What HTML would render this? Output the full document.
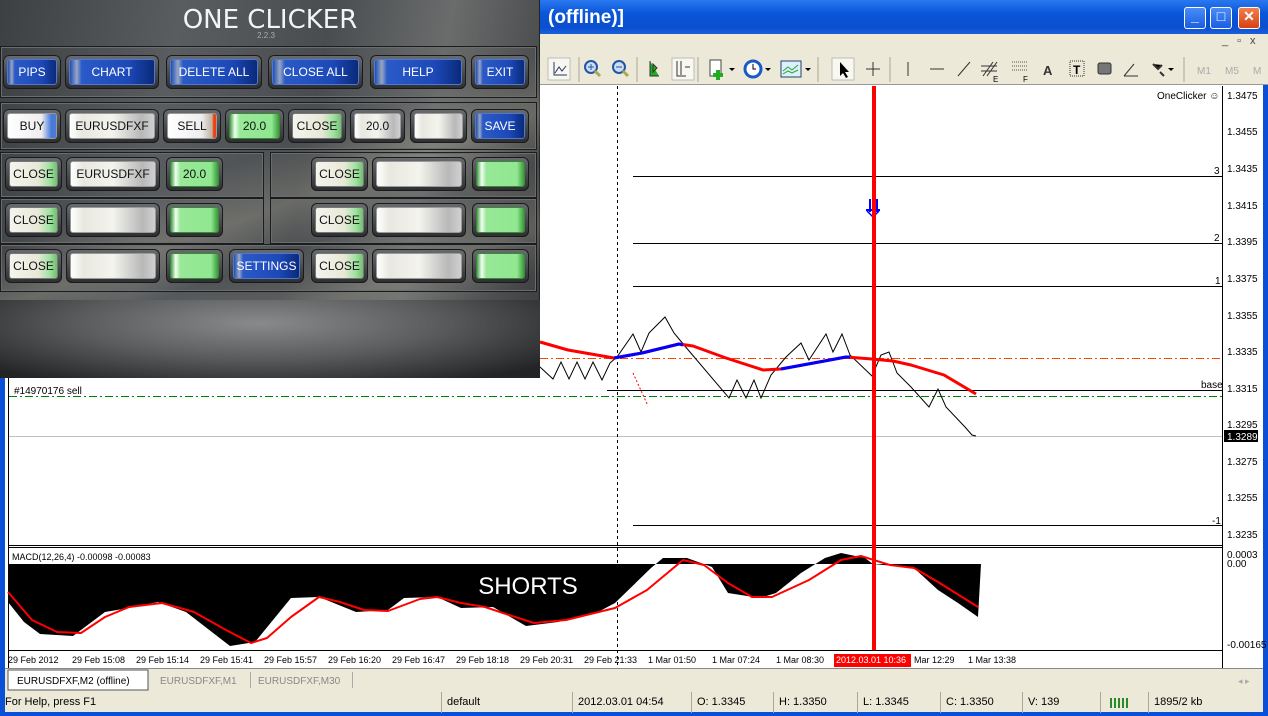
<!DOCTYPE html>
<html><head><meta charset="utf-8"><style>
*{margin:0;padding:0;box-sizing:border-box}
body{width:1268px;height:716px;overflow:hidden;position:relative;background:#fff;font-family:"Liberation Sans",sans-serif}
.a{position:absolute}
.tb{left:0;top:0;width:1268px;height:34px;background:linear-gradient(#2a78f0,#0a55d8 40%,#0a4fd0 80%,#1c5fd8)}
.menu{left:0;top:34px;width:1268px;height:20px;background:#ece9d8}
.tool{left:0;top:54px;width:1268px;height:31px;background:#ece9d8;border-bottom:1px solid #999}
.wb{width:22px;height:22px;border:1px solid #fff;border-radius:3px;background:linear-gradient(#4a8cf8,#1a5ee0);top:7px;color:#fff;font:bold 14px "Liberation Sans";text-align:center}
.panel{left:0;top:0;width:540px;height:378px;background:linear-gradient(100deg,#3d4043 0%,#5a5d60 30%,#4a4d50 55%,#6a6c6c 75%,#3a3c3e 100%);border-right:1px solid #222;border-bottom:1px solid #222}
.sec{position:absolute;border:1px solid #1c1c1c;box-shadow:inset 0 0 0 1px #6a6d70}
.f{position:absolute;border-radius:6px;background:linear-gradient(#6a6d70,#2c2e30);box-shadow:inset 0 0 0 1px #1a1a1a}
.b{position:absolute;left:4px;right:4px;top:4px;bottom:4px;border-radius:3px;font:12px "Liberation Sans";text-align:center;display:flex;align-items:center;justify-content:center}
.bl{background:linear-gradient(90deg,#1e4fb8 0%,#9aa6c0 8%,#2a5ac8 14%,#1c48b8 70%,#0a2a7a 100%);color:#fff;border:1px solid #5078d0}
.wh{background:linear-gradient(90deg,#fff 0%,#e8e8e0 15%,#f4f4ee 50%,#b8b8b8 85%,#d0d0d0 100%);color:#111;border:1px solid #9a9a9a}
.cl{background:linear-gradient(90deg,#f4f4ee 0%,#e8e8d8 60%,#a0e0a0 85%,#70c070 100%);color:#111;border:1px solid #777}
.gr{background:linear-gradient(90deg,#4a9a4a 0%,#f0fff0 10%,#98e898 20%,#90e890 85%,#3a9a3a 100%);color:#111;border:1px solid #3a8a3a}
.st{top:692px;height:21px;font:11px "Liberation Sans";color:#000;line-height:21px;border-left:1px solid #aca899;padding-left:5px}
</style></head><body>
<svg class="a" style="left:0;top:0" width="1268" height="716" font-family="Liberation Sans" font-size="10">
<rect x="0" y="85" width="1268" height="631" fill="#fff"/>
<rect x="0" y="85" width="5" height="631" fill="#0a4fd8"/>
<rect x="1263" y="0" width="5" height="716" fill="#0a4fd8"/>
<rect x="0" y="712" width="1268" height="4" fill="#0a4fd8"/>
<line x1="8.5" y1="86" x2="8.5" y2="668" stroke="#000"/>
<line x1="1222.5" y1="86" x2="1222.5" y2="668" stroke="#000"/>
<line x1="8" y1="545.5" x2="1222" y2="545.5" stroke="#000"/>
<line x1="8" y1="547.5" x2="1222" y2="547.5" stroke="#000"/>
<line x1="8" y1="650.5" x2="1222" y2="650.5" stroke="#000"/>
<g fill="#000">
<text x="1227" y="99">1.3475</text><text x="1227" y="135">1.3455</text><text x="1227" y="172">1.3435</text><text x="1227" y="209">1.3415</text><text x="1227" y="245">1.3395</text><text x="1227" y="282">1.3375</text><text x="1227" y="319">1.3355</text><text x="1227" y="355">1.3335</text><text x="1227" y="392">1.3315</text><text x="1227" y="428">1.3295</text><text x="1227" y="465">1.3275</text><text x="1227" y="501">1.3255</text><text x="1227" y="538">1.3235</text>
<text x="1227" y="558">0.0003</text><text x="1227" y="567">0.00</text><text x="1227" y="648">-0.00165</text>
<text x="1157" y="99">OneClicker ☺</text>
<text x="1214" y="174">3</text><text x="1214" y="241">2</text><text x="1215" y="284">1</text><text x="1201" y="388">base</text><text x="1212" y="524">-1</text>
<text x="14" y="394">#14970176 sell</text>
<text x="12" y="560" font-size="9">MACD(12,26,4) -0.00098 -0.00083</text>
</g>
<line x1="633" y1="176.5" x2="1222" y2="176.5" stroke="#000"/>
<line x1="633" y1="243.5" x2="1222" y2="243.5" stroke="#000"/>
<line x1="633" y1="286.5" x2="1222" y2="286.5" stroke="#000"/>
<line x1="607" y1="390.5" x2="1222" y2="390.5" stroke="#000"/>
<line x1="633" y1="525.5" x2="1222" y2="525.5" stroke="#000"/>
<line x1="540" y1="358.5" x2="1222" y2="358.5" stroke="#ff4500" stroke-dasharray="8,3,2,3"/>
<line x1="9" y1="396.5" x2="1222" y2="396.5" stroke="#008000" stroke-dasharray="8,3,2,3"/>
<line x1="9" y1="436.5" x2="1222" y2="436.5" stroke="#c0c0c0"/>
<rect x="1224" y="430" width="34" height="12" fill="#000"/><text x="1227" y="440" fill="#fff">1.3289</text>
<line x1="617.5" y1="86" x2="617.5" y2="668" stroke="#000" stroke-dasharray="3,3"/>
<line x1="633" y1="373" x2="648" y2="406" stroke="#f00" stroke-dasharray="2,2"/>
<polyline fill="none" stroke="#000" stroke-width="1" points="540,367 553,379 561,362 569,379 577,362 585,379 593,362 602,380 610,363 617,357 633,334 641,352 649,333 665,317 674,333 684,345 729,398 737,380 746,398 754,380 761,398 771,375 786,357 801,343 809,360 826,334 833,352 842,334 850,355 872,376 881,355 889,352 897,373 911,387 929,407 938,389 946,407 965,427 972,435 976,436"/>
<polyline fill="none" stroke="#f00" stroke-width="3" stroke-linejoin="round" points="540,342 568,350 614,358 642,353 679,344 693,346 726,358 763,370 781,369 819,362 846,357 872,359 893,361 911,365 944,375 976,394"/>
<polyline fill="none" stroke="#00f" stroke-width="3" stroke-linejoin="round" points="614,358 642,353 679,344 683,345"/>
<polyline fill="none" stroke="#00f" stroke-width="3" stroke-linejoin="round" points="781,369 819,362 846,357 850,357"/>
<path d="M870 199v13M877 199v13M866 210h14" stroke="#00f" stroke-width="2" fill="none"/><path d="M867 211l6 6 6-6" stroke="#00f" stroke-width="1.5" fill="none"/>
<polygon fill="#000" points="8,564 981,564 978,617 958,603 938,590 914,568 873,564 865,558 841,553 825,558 801,573 776,593 760,598 728,593 712,567 687,558 663,558 651,568 615,603 598,612 558,622 526,626 493,607 461,608 437,597 404,598 388,610 356,612 319,597 291,598 255,642 230,646 186,612 158,602 129,608 105,612 73,636 40,634 24,622 8,602"/>
<polyline fill="none" stroke="#f00" stroke-width="2" stroke-linejoin="round" points="8,592 32,620 57,632 81,633 105,617 129,607 162,603 194,612 226,630 251,643 267,638 291,617 319,597 340,602 364,610 388,611 420,599 437,597 461,603 485,607 509,615 534,623 566,620 615,608 647,590 683,560 704,565 728,583 752,597 772,597 809,580 841,560 861,556 890,565 914,568 938,582 978,607"/>
<text x="528" y="594" fill="#fff" font-size="24" text-anchor="middle">SHORTS</text>
<rect x="872" y="86" width="4" height="564" fill="#f00"/>
<g font-size="9" fill="#000">
<text x="8" y="663">29 Feb 2012</text><text x="72" y="663">29 Feb 15:08</text><text x="136" y="663">29 Feb 15:14</text><text x="200" y="663">29 Feb 15:41</text><text x="264" y="663">29 Feb 15:57</text><text x="328" y="663">29 Feb 16:20</text><text x="392" y="663">29 Feb 16:47</text><text x="456" y="663">29 Feb 18:18</text><text x="520" y="663">29 Feb 20:31</text><text x="584" y="663">29 Feb 21:33</text><text x="648" y="663">1 Mar 01:50</text><text x="712" y="663">1 Mar 07:24</text><text x="776" y="663">1 Mar 08:30</text><text x="914" y="663">Mar 12:29</text><text x="968" y="663">1 Mar 13:38</text>
</g>
<rect x="834" y="654" width="77" height="13" fill="#f00"/><text x="836" y="663" font-size="9" fill="#fff">2012.03.01 10:36</text>
<rect x="5" y="668" width="1258" height="24" fill="#ece9d8"/>
<line x1="5" y1="668.5" x2="1263" y2="668.5" stroke="#888"/>
<rect x="8" y="670" width="140" height="20" fill="#fff" stroke="#555"/>
<text x="17" y="684" font-size="10">EURUSDFXF,M2 (offline)</text>
<text x="160" y="684" font-size="10" fill="#888">EURUSDFXF,M1</text>
<text x="258" y="684" font-size="10" fill="#888">EURUSDFXF,M30</text>
<line x1="250.5" y1="672" x2="250.5" y2="688" stroke="#aaa"/><line x1="352.5" y1="672" x2="352.5" y2="688" stroke="#aaa"/>
<text x="1238" y="684" fill="#aaa" font-size="9">◂ ▸</text>
<rect x="5" y="692" width="1258" height="20" fill="#ece9d8"/>
<g fill="#2a8a2a"><rect x="1110" y="698" width="2" height="10"/><rect x="1114" y="698" width="2" height="10"/><rect x="1118" y="698" width="2" height="10"/><rect x="1122" y="698" width="2" height="10"/><rect x="1126" y="698" width="2" height="10"/></g>
</svg>
<div class="a st" style="left:0;border:none">For Help, press F1</div>
<div class="a st" style="left:441px">default</div>
<div class="a st" style="left:572px">2012.03.01 04:54</div>
<div class="a st" style="left:691px">O: 1.3345</div>
<div class="a st" style="left:773px">H: 1.3350</div>
<div class="a st" style="left:857px">L: 1.3345</div>
<div class="a st" style="left:940px">C: 1.3350</div>
<div class="a st" style="left:1022px">V: 139</div>
<div class="a st" style="left:1100px;width:48px"></div>
<div class="a st" style="left:1148px">1895/2 kb</div>

<div class="a tb"></div>
<div class="a" style="left:548px;top:7px;color:#fff;font:bold 19px 'Liberation Sans'">(offline)]</div>
<div class="a wb" style="left:1184px">_</div>
<div class="a wb" style="left:1210px">□</div>
<div class="a wb" style="left:1238px;background:linear-gradient(#f08050,#d84010)">✕</div>
<div class="a menu"></div>
<div class="a" style="left:1222px;top:35px;font:11px 'Liberation Sans';color:#444;letter-spacing:9px">_▫x</div>
<div class="a tool"></div>
<svg class="a" style="left:540px;top:54px" width="728" height="31" font-family="Liberation Sans">
<g stroke="#aca899"><line x1="39" y1="3" x2="39" y2="28"/><line x1="97" y1="3" x2="97" y2="28"/><line x1="158" y1="3" x2="158" y2="28"/><line x1="278" y1="3" x2="278" y2="28"/><line x1="350" y1="3" x2="350" y2="28"/><line x1="644" y1="3" x2="644" y2="28"/></g>
<rect x="8" y="4" width="22" height="22" fill="#f8f8f0" stroke="#bbb"/>
<path d="M14 8v13h13M15 19l4-6 3 4 4-5" stroke="#236" fill="none"/>
<circle cx="51" cy="13" r="6" fill="#cde" stroke="#25a" stroke-width="2"/><path d="M48 13h6M51 10v6" stroke="#25a"/><path d="M55 17l5 5" stroke="#aa5" stroke-width="3"/>
<circle cx="79" cy="13" r="6" fill="#cde" stroke="#25a" stroke-width="2"/><path d="M76 13h6" stroke="#25a"/><path d="M83 17l5 5" stroke="#aa5" stroke-width="3"/>
<path d="M110 7v15h9M113 10v8l4-4z" stroke="#333" fill="#2a2"/>
<rect x="132" y="4" width="22" height="22" fill="#f8f8f0" stroke="#bbb"/><path d="M137 7v15h9M141 7v14M145 13h5" stroke="#333" fill="none"/>
<rect x="170" y="6" width="11" height="16" fill="#fff" stroke="#444"/><path d="M178 16v10M173 21h10" stroke="#2a2" stroke-width="4"/><path d="M189 14l3 3 3-3z" fill="#000"/>
<circle cx="213" cy="15" r="8" fill="#fff" stroke="#1a5ac8" stroke-width="3"/><path d="M213 10v5h3" stroke="#000" fill="none"/><path d="M225 14l3 3 3-3z" fill="#000"/>
<rect x="241" y="7" width="20" height="16" fill="#def" stroke="#246"/><path d="M243 17l5-4 4 3 6-5M243 20l5-3 4 2 6-3" stroke="#2a2" fill="none"/><path d="M265 14l3 3 3-3z" fill="#000"/>
<rect x="292" y="4" width="22" height="22" fill="#f8f8f0" stroke="#bbb"/><path d="M300 8v14l3-3 3 5 2-1-3-5h4z" fill="#000"/>
<path d="M333 8v14M326 15h14" stroke="#333"/>
<path d="M368 8v14" stroke="#333"/><path d="M390 15h14" stroke="#333"/><path d="M418 22l12-14" stroke="#333"/>
<path d="M443 22l10-14M447 22l10-14M441 12h16M441 17h16" stroke="#333"/><text x="453" y="28" font-size="8">E</text>
<path d="M472 8h16M472 12h16M472 16h16" stroke="#555" stroke-dasharray="1,1"/><text x="483" y="28" font-size="8">F</text>
<text x="503" y="21" font-size="13" font-weight="bold" fill="#333">A</text>
<rect x="530" y="7" width="14" height="15" fill="none" stroke="#333" stroke-dasharray="1,1"/><text x="533" y="20" font-size="12" font-weight="bold">T</text>
<rect x="558" y="9" width="13" height="11" rx="2" fill="#777" stroke="#333"/>
<path d="M584 22h14M584 22l10-12" stroke="#333" fill="none"/>
<path d="M613 10l5 5 4-4M620 18l4 4" stroke="#333" stroke-width="2"/><path d="M628 14l3 3 3-3z" fill="#000"/>
<g fill="#aaa" font-size="10"><text x="657" y="20">M1</text><text x="685" y="20">M5</text><text x="713" y="20">M</text></g>
</svg>

<div class="a panel">
<div class="a" style="left:0;top:0;width:540px;height:300px;background:linear-gradient(160deg,transparent 50%,rgba(200,195,170,.25) 62%,transparent 72%,rgba(200,195,170,.2) 85%,transparent 95%)"></div>
<div class="a" style="left:0;top:300px;width:540px;height:78px;background:radial-gradient(ellipse at 48% 30%,#888a8c 0%,#5a5c5e 45%,#222426 90%)"></div>
<div class="a" style="left:0;top:5px;width:540px;text-align:center;color:#f4f4f4;font:26px 'DejaVu Sans',sans-serif">ONE CLICKER</div>
<div class="a" style="left:0;top:31px;width:532px;text-align:center;color:#aaa;font:8px 'Liberation Sans'">2.2.3</div>
<div class="sec" style="left:0;top:46px;width:537px;height:52px"></div>
<div class="sec" style="left:0;top:102px;width:537px;height:48px"></div>
<div class="sec" style="left:0;top:152px;width:264px;height:46px"></div>
<div class="sec" style="left:270px;top:152px;width:267px;height:46px"></div>
<div class="sec" style="left:0;top:198px;width:264px;height:46px"></div>
<div class="sec" style="left:270px;top:198px;width:267px;height:46px"></div>
<div class="sec" style="left:0;top:244px;width:537px;height:48px"></div>

<div class="f" style="left:3px;top:55px;width:58px;height:34px"><div class="b bl">PIPS</div></div>
<div class="f" style="left:65px;top:55px;width:94px;height:34px"><div class="b bl">CHART</div></div>
<div class="f" style="left:166px;top:55px;width:96px;height:34px"><div class="b bl">DELETE ALL</div></div>
<div class="f" style="left:268px;top:55px;width:95px;height:34px"><div class="b bl">CLOSE ALL</div></div>
<div class="f" style="left:370px;top:55px;width:96px;height:34px"><div class="b bl">HELP</div></div>
<div class="f" style="left:471px;top:55px;width:58px;height:34px"><div class="b bl">EXIT</div></div>

<div class="f" style="left:3px;top:109px;width:58px;height:34px"><div class="b wh" style="background:linear-gradient(90deg,#fff,#eee 70%,#4a7ad8 90%)">BUY</div></div>
<div class="f" style="left:65px;top:109px;width:94px;height:34px"><div class="b wh">EURUSDFXF</div></div>
<div class="f" style="left:163px;top:109px;width:58px;height:34px"><div class="b wh" style="background:linear-gradient(90deg,#fff,#eee 70%,#c0b0a0 92%,#f04010 95%)">SELL</div></div>
<div class="f" style="left:225px;top:109px;width:59px;height:34px"><div class="b gr">20.0</div></div>
<div class="f" style="left:288px;top:109px;width:58px;height:34px"><div class="b cl">CLOSE</div></div>
<div class="f" style="left:350px;top:109px;width:55px;height:34px"><div class="b wh">20.0</div></div>
<div class="f" style="left:410px;top:109px;width:57px;height:34px"><div class="b wh"></div></div>
<div class="f" style="left:471px;top:109px;width:58px;height:34px"><div class="b bl">SAVE</div></div>

<div class="f" style="left:5px;top:157px;width:57px;height:34px"><div class="b cl">CLOSE</div></div>
<div class="f" style="left:66px;top:157px;width:94px;height:34px"><div class="b wh">EURUSDFXF</div></div>
<div class="f" style="left:166px;top:157px;width:57px;height:34px"><div class="b gr">20.0</div></div>
<div class="f" style="left:311px;top:157px;width:57px;height:34px"><div class="b cl">CLOSE</div></div>
<div class="f" style="left:372px;top:157px;width:94px;height:34px"><div class="b wh"></div></div>
<div class="f" style="left:472px;top:157px;width:57px;height:34px"><div class="b gr"></div></div>

<div class="f" style="left:5px;top:203px;width:57px;height:34px"><div class="b cl">CLOSE</div></div>
<div class="f" style="left:66px;top:203px;width:94px;height:34px"><div class="b wh"></div></div>
<div class="f" style="left:166px;top:203px;width:57px;height:34px"><div class="b gr"></div></div>
<div class="f" style="left:311px;top:203px;width:57px;height:34px"><div class="b cl">CLOSE</div></div>
<div class="f" style="left:372px;top:203px;width:94px;height:34px"><div class="b wh"></div></div>
<div class="f" style="left:472px;top:203px;width:57px;height:34px"><div class="b gr"></div></div>

<div class="f" style="left:5px;top:249px;width:57px;height:34px"><div class="b cl">CLOSE</div></div>
<div class="f" style="left:66px;top:249px;width:94px;height:34px"><div class="b wh"></div></div>
<div class="f" style="left:166px;top:249px;width:57px;height:34px"><div class="b gr"></div></div>
<div class="f" style="left:229px;top:249px;width:75px;height:34px"><div class="b bl">SETTINGS</div></div>
<div class="f" style="left:311px;top:249px;width:57px;height:34px"><div class="b cl">CLOSE</div></div>
<div class="f" style="left:372px;top:249px;width:94px;height:34px"><div class="b wh"></div></div>
<div class="f" style="left:472px;top:249px;width:57px;height:34px"><div class="b gr"></div></div>
</div>
</body></html>
